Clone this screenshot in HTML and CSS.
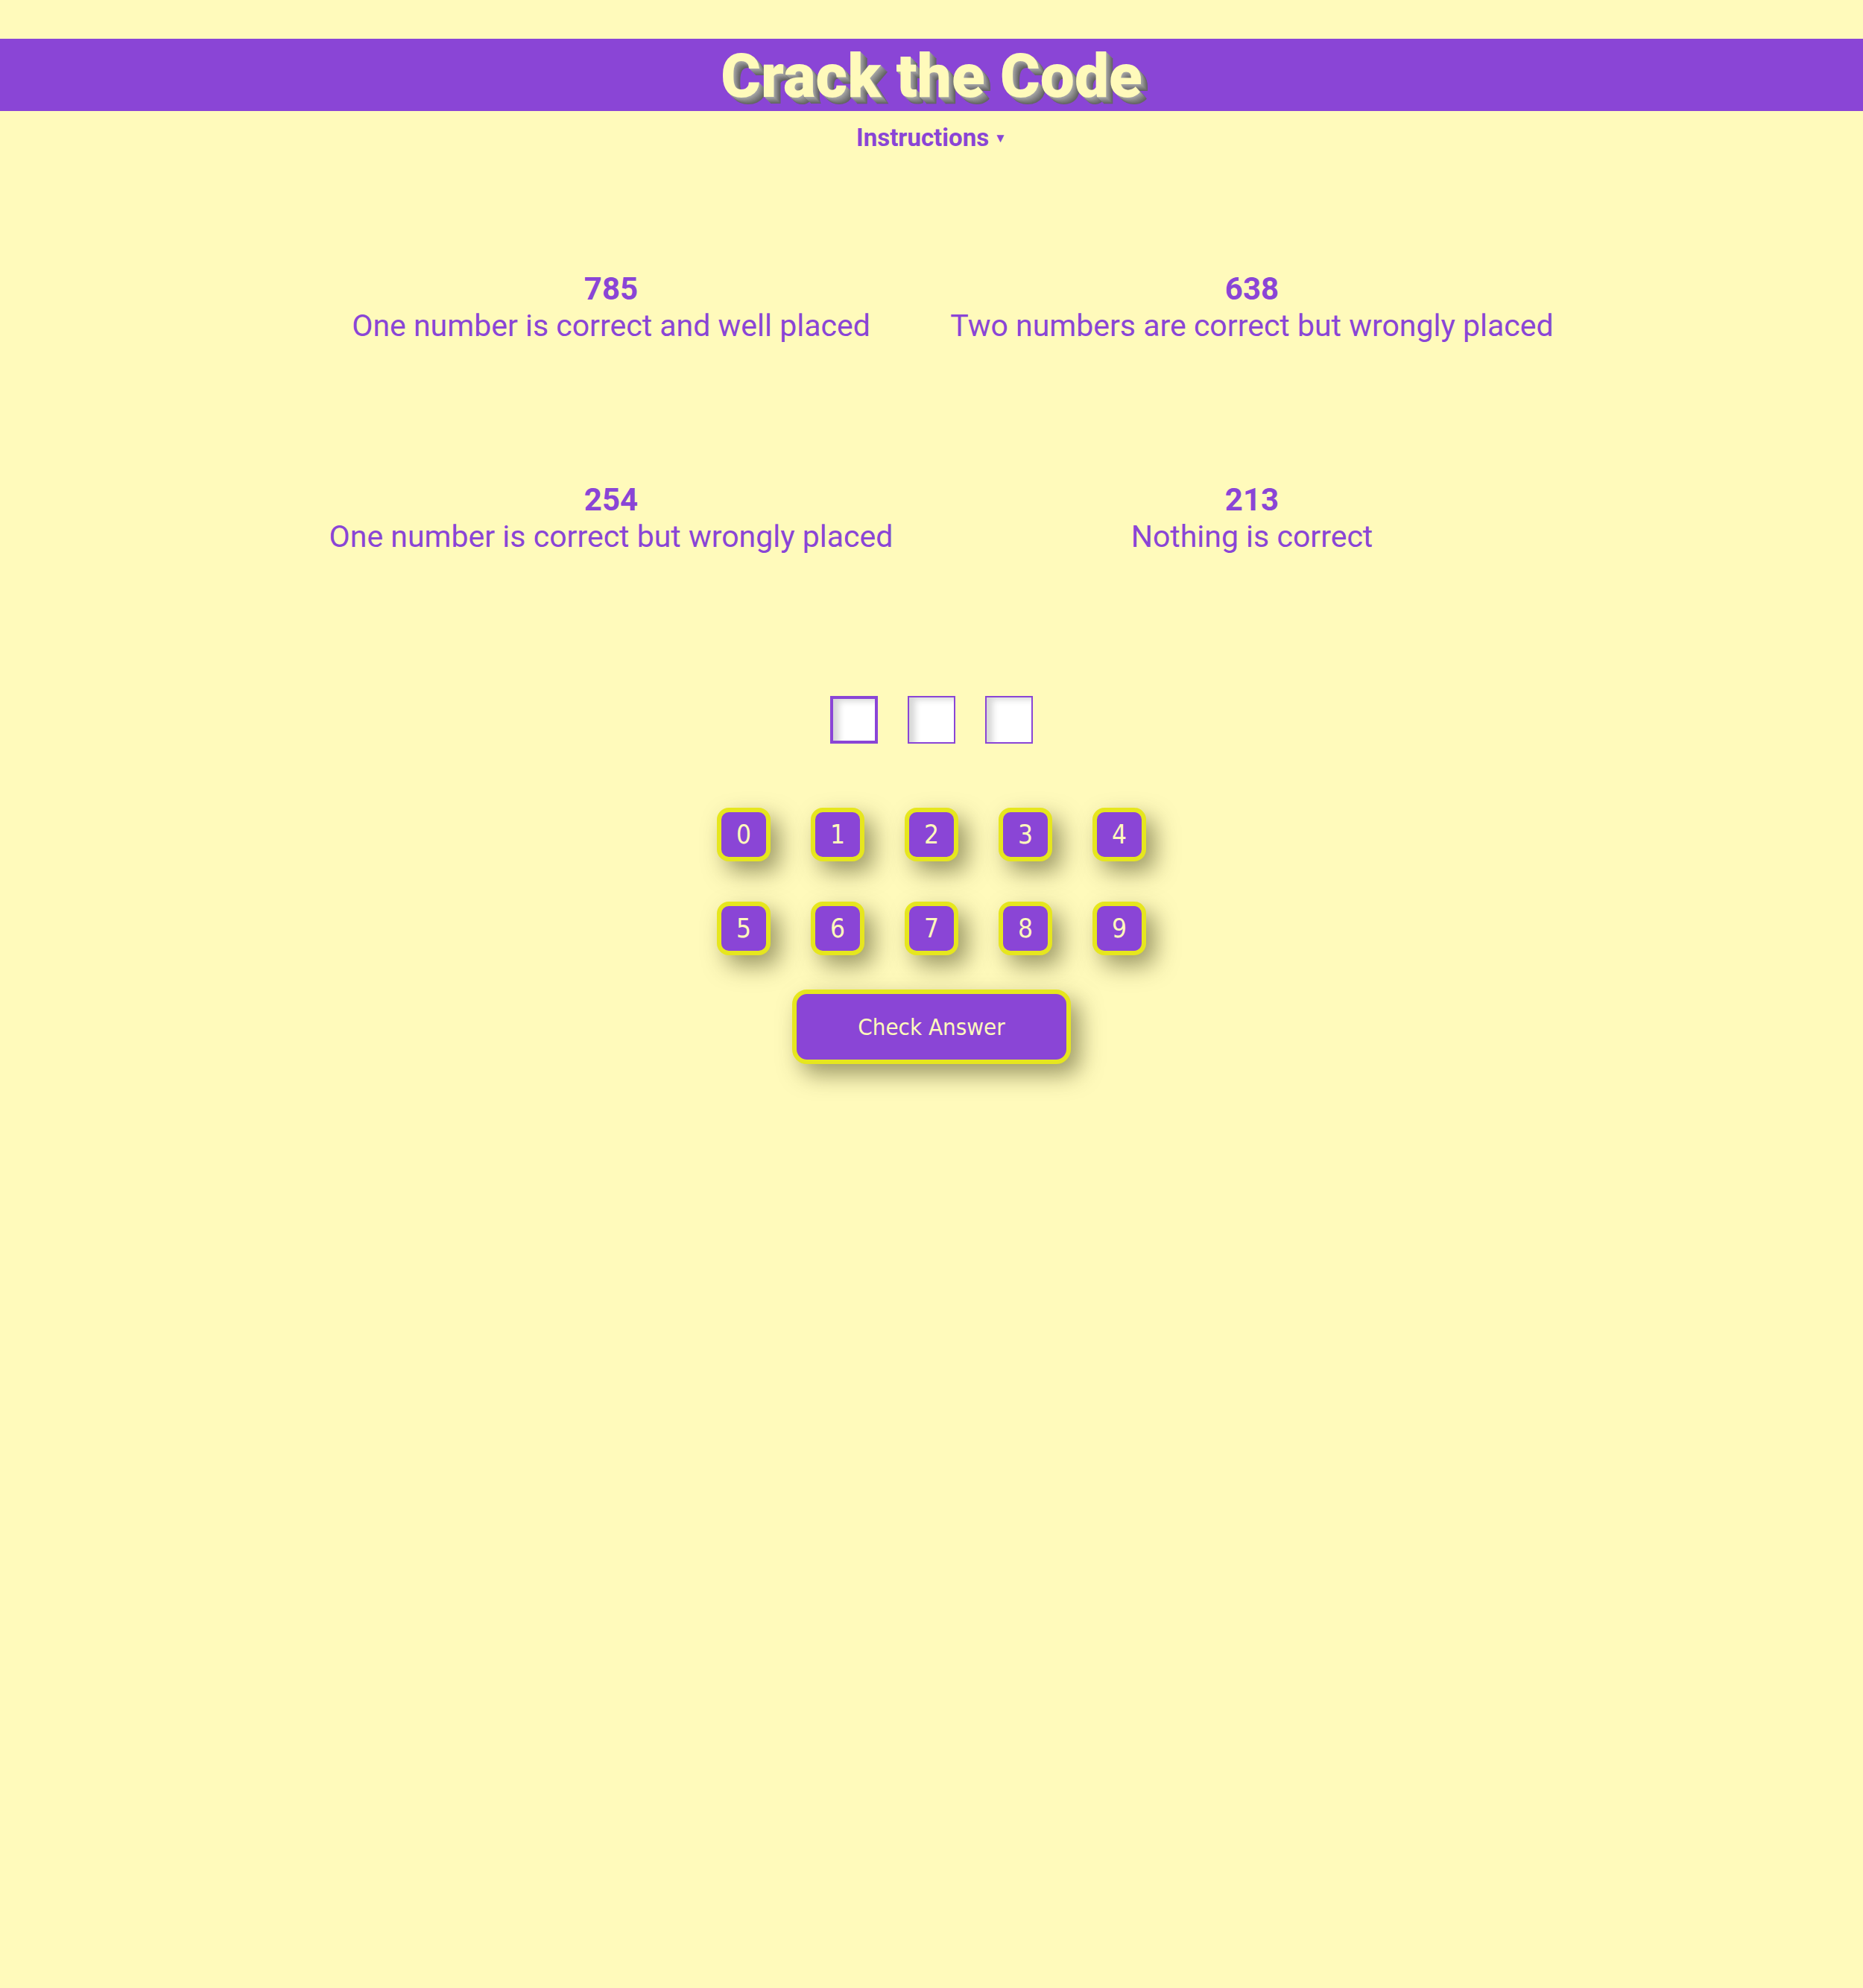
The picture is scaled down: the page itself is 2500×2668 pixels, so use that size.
FILE: index.html
```html
<!DOCTYPE html>
<html lang="en">
<head>
<meta charset="utf-8">
<title>Crack the Code</title>
<link rel="stylesheet" href="styles.css">
</head>
<body>
<header class="banner">
  <h1 class="title">Crack the Code</h1>
</header>
<details class="instructions">
  <summary class="instructions-toggle">Instructions<span class="caret">▼</span></summary>
</details>
<section class="clues">
  <div class="clue"><div class="clue-code">785</div><div class="clue-text">One number is correct and well placed</div></div>
  <div class="clue"><div class="clue-code">638</div><div class="clue-text">Two numbers are correct but wrongly placed</div></div>
  <div class="clue"><div class="clue-code">254</div><div class="clue-text">One number is correct but wrongly placed</div></div>
  <div class="clue"><div class="clue-code">213</div><div class="clue-text">Nothing is correct</div></div>
</section>
<div class="answer">
  <input class="slot slot-active" type="text" maxlength="1">
  <input class="slot" type="text" maxlength="1">
  <input class="slot" type="text" maxlength="1">
</div>
<div class="keypad">
  <button class="key">0</button>
  <button class="key">1</button>
  <button class="key">2</button>
  <button class="key">3</button>
  <button class="key">4</button>
  <button class="key">5</button>
  <button class="key">6</button>
  <button class="key">7</button>
  <button class="key">8</button>
  <button class="key">9</button>
</div>
<div class="actions">
  <button class="check">Check Answer</button>
</div>
</body>
</html>
```
FILE: styles.css
```css
body {
  margin: 0;
  padding-bottom: 200px;
  background: #fffabb;
  font-family: Roboto, "Liberation Sans", sans-serif;
  color: #8a45d6;
}

.banner {
  margin-top: 52px;
  height: 97px;
  background: #8a45d6;
}

.title {
  margin: 0;
  font-family: Roboto, sans-serif;
  font-weight: 900;
  font-size: 82px;
  line-height: 100px;
  height: 97px;
  overflow: visible;
  text-align: center;
  color: #fffabb;
  text-shadow:
    1px 1px 0 #a3a3a3,
    2px 2px 0 #9b9b9b,
    3px 3px 0 #939393,
    4px 4px 0 #8b8b8b,
    5px 5px 0 #838383,
    6px 6px 0 #7b7b7b,
    7px 7px 0 #737373,
    8px 8px 0 #6b6b6b,
    9px 9px 0 #646464;
}

.instructions {
  margin-top: 17px;
  text-align: center;
}

.instructions-toggle {
  display: inline-block;
  list-style: none;
  font-size: 33px;
  line-height: 38px;
  font-weight: 700;
  color: #8a45d6;
  cursor: pointer;
}

.instructions-toggle::-webkit-details-marker {
  display: none;
}

.caret {
  font-size: 17px;
  margin-left: 7px;
  vertical-align: 5px;
}

.clues {
  width: 1720px;
  margin: 159px auto 0;
  display: grid;
  grid-template-columns: 1fr 1fr;
  row-gap: 185px;
  text-align: center;
}

.clue-code {
  font-size: 42px;
  line-height: 50px;
  font-weight: 700;
}

.clue-text {
  font-size: 41px;
  line-height: 48px;
}

.answer {
  margin-top: 190px;
  display: flex;
  justify-content: center;
  gap: 40px;
}

.slot {
  box-sizing: border-box;
  width: 64px;
  height: 64px;
  margin: 0;
  padding: 0;
  border: 2px solid #8a45d6;
  background: #ffffff;
  box-shadow: inset 10px 5px 8px -2px rgba(0, 0, 0, 0.16);
  outline: none;
}

.slot-active {
  border-width: 4px;
}

.keypad {
  margin: 86px auto 0;
  width: 576px;
  display: grid;
  grid-template-columns: repeat(5, 72px);
  column-gap: 54px;
  row-gap: 54px;
}

.key,
.check {
  box-sizing: border-box;
  margin: 0;
  padding: 0;
  background: #8a45d6;
  color: #fffabb;
  border: 6px solid #e6e61e;
  font-family: "DejaVu Sans Condensed", "DejaVu Sans", sans-serif;
  font-stretch: condensed;
  box-shadow: 12px 14px 30px rgba(60, 60, 20, 0.5);
  cursor: pointer;
}

.key {
  width: 72px;
  height: 72px;
  border-radius: 16px;
  font-size: 35px;
}

.actions {
  margin-top: 46px;
  display: flex;
  justify-content: center;
}

.check {
  width: 374px;
  height: 100px;
  border-radius: 20px;
  font-size: 31px;
}
```
